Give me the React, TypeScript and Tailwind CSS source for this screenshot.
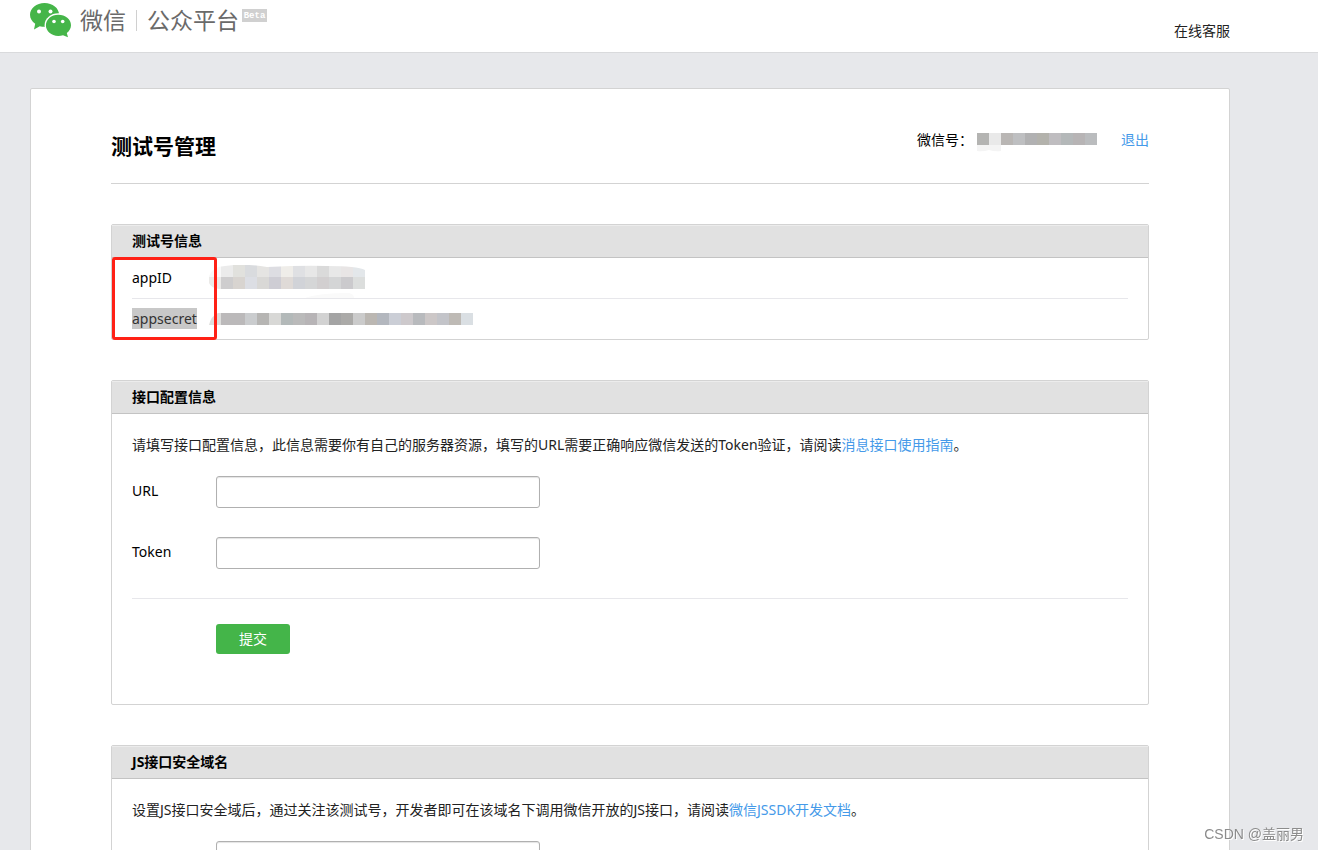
import React from 'react';

interface PanelProps {
    title: string;
    children: React.ReactNode;
}

const Panel: React.FC<PanelProps> = ({ title, children }) => (
    <section className="mb-10 rounded-xs border border-[#d3d3d3]">
        <h2 className="h-[33px] border-b border-[#c3c3c3] bg-[#e1e1e1] px-5 text-sm leading-8 font-bold text-black inset-shadow-[0_1px_0_#ececec]">
            {title}
        </h2>
        {children}
    </section>
);

const Field: React.FC<{ id: string; label: string }> = ({ id, label }) => (
    <div className="flex">
        <label htmlFor={id} className="w-21 shrink-0 pt-[5px] text-sm leading-5 text-black">
            {label}
        </label>
        <input
            type="text"
            id={id}
            className="h-8 w-full max-w-81 rounded-[3px] border border-[#b0b0b0] bg-white px-2 text-sm inset-shadow-[0_1px_1px_#e4e4e4] outline-none"
        />
    </div>
);

const Mosaic: React.FC<{ colors: string[]; rowLength: number }> = ({ colors, rowLength }) => (
    <g shapeRendering="crispEdges">
        {colors.map((color, i) => (
            <rect key={i} x={(i % rowLength) * 12} y={Math.floor(i / rowLength) * 12} width="12" height="12" fill={color} />
        ))}
    </g>
);

const accountColors = ['#b4b4b2', '#e9e9e9', '#b9b6b4', '#bebfc1', '#b1b1b2', '#b3b2ac', '#bfbdc0', '#b4b8b9', '#b7b4b5', '#babcbe'];

const appIdColors = [
    '#ebebeb', '#e1e1dd', '#d9dbde', '#e5e4e2', '#dddde2', '#efede9', '#dfe0e3', '#e7e7e7', '#dadada', '#e8e8e8', '#e8e5e5', '#e3e7ea',
    '#cecdce', '#d8d4d0', '#dcdee4', '#d9d8d6', '#cecdd4', '#dfdad7', '#d1d3d8', '#d5d6d7', '#d2cfd0', '#d4d5d6', '#cbcacd', '#dcdedd',
];

const secretColors = [
    '#bbb9ba', '#bbb9ba', '#caccce', '#b6b5b3', '#d8d8d6', '#b3b9b9', '#bababa', '#b7b4b6', '#d2d2d2', '#a4a4a4', '#abaaa8',
    '#cbcbcb', '#bbb7b2', '#b3b7be', '#cbced6', '#cdc9cc', '#b8babd', '#ccc7c7', '#c3c4c9', '#bebab5', '#dadfe3',
];

const Logo: React.FC = () => (
    <svg width="42" height="36" viewBox="0 0 42 36" className="mt-[2px] shrink-0" aria-hidden="true">
        <path
            d="M14.500 1C6.500 1 0 6.200 0 12.800c0 3.700 2 6.900 5.200 9L4 27.500l5.800-3.300c1.500.4 3.100.6 4.700.6 8.100 0 14.600-5.300 14.600-12S22.600 1 14.500 1Z"
            fill="#45b549"
        />
        <ellipse cx="28.300" cy="23.200" rx="13.700" ry="11.900" fill="#fff" />
        <path
            d="M28.300 12.800c-7 0-12.400 4.700-12.400 10.500S21.300 34 28.300 34c1.700 0 3.200-.3 4.700-.8l5 2-1.200-4.100c2.500-2 4.200-4.800 4.200-7.900 0-5.900-5.700-10.400-12.700-10.400Z"
            fill="#45b549"
        />
        <g fill="#fff">
            <circle cx="9" cy="9.500" r="2" />
            <circle cx="20.500" cy="9.500" r="2" />
            <circle cx="24" cy="19.500" r="1.800" />
            <circle cx="32.700" cy="19.500" r="1.800" />
        </g>
    </svg>
);

const Header: React.FC = () => (
    <header className="h-[53px] border-b border-[#d9dadc] bg-white">
        <div className="ml-[30px] flex max-w-[1200px] items-start justify-between">
            <a href="#" className="flex items-start text-[23px] leading-10 text-[#6a6a6a]">
                <Logo />
                <span className="ml-2">微信</span>
                <span className="mx-[10px] mt-[10px] h-[21px] w-px bg-[#d0d0d0]" />
                <span>公众平台</span>
                <span className="mt-[9px] ml-[3px] h-[13px] w-[25px] bg-[#d0d0d0] text-center font-['Liberation_Mono',monospace] text-[9px] leading-[14px] font-bold text-white">
                    Beta
                </span>
            </a>
            <a href="#" className="mt-[21px] text-sm leading-5 text-[#222]">在线客服</a>
        </div>
    </header>
);

const App: React.FC = () => {
    return (
        <div className="min-h-screen bg-[#e7e8eb] font-['Noto_Sans','Noto_Sans_CJK_SC',sans-serif] text-sm text-[#222]">
            <Header />
            <main className="mt-[35px] ml-[30px] max-w-[1200px] rounded-xs border border-[#d3d3d3] bg-white px-20 pb-10">
                <div className="mb-10 flex items-start justify-between border-b border-[#d3d3d3] pt-10 pb-5">
                    <h1 className="text-[21px] leading-[34px] font-bold text-black">测试号管理</h1>
                    <div className="flex pt-[1px] leading-5 text-black">
                        <span>微信号：</span>
                        <svg width="120" height="19" className="mt-[3px] ml-1" aria-hidden="true">
                            <path d="M0 12h24v6q-6 1-12-1-6 2-12 1Z" fill="#f4f4f4" />
                            <Mosaic colors={accountColors} rowLength={10} />
                        </svg>
                        <a href="#" className="ml-6 text-[#459ae9]">退出</a>
                    </div>
                </div>

                <Panel title="测试号信息">
                    <div className="relative px-5">
                        <dl>
                            <div className="flex h-[41px] border-b border-[#e7e7eb] pt-[10px]">
                                <dt className="w-[77px] leading-5 text-black">appID</dt>
                                <dd>
                                    <svg width="158" height="36" viewBox="0 0 158 36" className="-mt-[5px]" aria-hidden="true">
                                        <defs>
                                            <clipPath id="smear">
                                                <path d="M0 13Q4 3 16 3q20-3 42 1 40-2 60-1 30 0 38 4v19H10Q2 25 0 20Z" />
                                            </clipPath>
                                        </defs>
                                        <path d="M96 35q14-5 44-5 5 1 5 5Z" fill="#fafafa" />
                                        <g clipPath="url(#smear)">
                                            <rect width="12" height="14" fill="#f8f8f8" />
                                            <rect y="14" width="12" height="12" fill="#ebeae8" />
                                            <g transform="translate(12 2)">
                                                <Mosaic colors={appIdColors} rowLength={12} />
                                            </g>
                                        </g>
                                    </svg>
                                </dd>
                            </div>
                            <div className="flex h-10 pt-[10px]">
                                <dt className="w-[77px] leading-5 text-[#333]">
                                    <span className="bg-[#c8c8c8] py-[1px]">appsecret</span>
                                </dt>
                                <dd>
                                    <svg width="264" height="12" className="mt-[4px]" aria-hidden="true">
                                        <path d="M0 12Q2 3 9 0h3v12Z" fill="#dededc" />
                                        <g transform="translate(12 0)">
                                            <Mosaic colors={secretColors} rowLength={21} />
                                        </g>
                                    </svg>
                                </dd>
                            </div>
                        </dl>
                        <div className="absolute -top-px left-0 h-[83px] w-[105px] rounded-[3px] border-3 border-[#ff2116]" />
                    </div>
                </Panel>

                <Panel title="接口配置信息">
                    <form className="px-5 pt-5 pb-[50px]" onSubmit={(e) => e.preventDefault()}>
                        <p className="mb-5 leading-[22px]">
                            请填写接口配置信息，此信息需要你有自己的服务器资源，填写的URL需要正确响应微信发送的Token验证，请阅读
                            <a href="#" className="text-[#459ae9]">消息接口使用指南</a>。
                        </p>
                        <div className="space-y-[29px] border-b border-[#e7e7eb] pb-[29px]">
                            <Field id="url" label="URL" />
                            <Field id="token" label="Token" />
                        </div>
                        <button
                            type="submit"
                            className="mt-[25px] ml-21 block h-[30px] w-[74px] rounded-[3px] bg-[#44b549] text-sm text-white"
                        >
                            提交
                        </button>
                    </form>
                </Panel>

                <Panel title="JS接口安全域名">
                    <div className="px-5 pt-5 pb-[50px]">
                        <p className="mb-5 leading-[22px]">
                            设置JS接口安全域后，通过关注该测试号，开发者即可在该域名下调用微信开放的JS接口，请阅读
                            <a href="#" className="text-[#459ae9]">微信JSSDK开发文档</a>。
                        </p>
                        <input
                            type="text"
                            aria-label="域名"
                            className="ml-21 block h-8 w-full max-w-81 rounded-[3px] border border-[#b0b0b0] bg-white px-2 text-sm inset-shadow-[0_1px_1px_#e4e4e4] outline-none"
                        />
                    </div>
                </Panel>
            </main>
            <div className="fixed right-[14px] bottom-[6px] font-['Liberation_Sans','Noto_Sans_CJK_SC',sans-serif] text-sm leading-5 text-[#8c8c8c] text-shadow-[1px_1px_0_#fff]">
                CSDN @盖丽男
            </div>
        </div>
    );
};

export default App;
